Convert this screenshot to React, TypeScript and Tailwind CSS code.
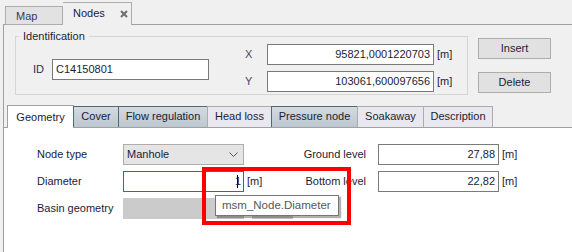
import type { ReactNode } from "react";

const innerTabs: { label: string; width: string; kind: "active" | "blue" | "light" }[] = [
  { label: "Geometry", width: "w-[67px]", kind: "active" },
  { label: "Cover", width: "w-[46px]", kind: "blue" },
  { label: "Flow regulation", width: "w-[90px]", kind: "blue" },
  { label: "Head loss", width: "w-[65px]", kind: "light" },
  { label: "Pressure node", width: "w-[87px]", kind: "blue" },
  { label: "Soakaway", width: "w-[67px]", kind: "light" },
  { label: "Description", width: "w-[70px]", kind: "light" }
];

const tabKindClass = {
  active: "h-[23px] -mb-px bg-white border border-b-0 border-[#a0a0a0] text-[#1b1b38] pt-[5px]",
  blue: "h-[21px] bg-gradient-to-b from-[#d3dbe1] to-[#bcc7cf] border border-b-0 border-[#4f6a73] text-[#1b1b38] pt-[3px]",
  light: "h-[21px] bg-[#e8e8ee] border border-b-0 border-[#acacac] text-[#1b1b38] pt-[3px]"
};

function Unit() {
  return <span className="ml-[3px] text-[#1b1b38]">[m]</span>;
}

function Field({ children, className = "" }: { children?: ReactNode; className?: string }) {
  return (
    <div className={`h-[21px] bg-white border border-[#7a7a7a] flex items-center justify-end pr-[3px] text-[#1b1b38] ${className}`}>
      {children}
    </div>
  );
}

export default function App() {
  return (
    <div
      className="relative w-[572px] h-[252px] overflow-hidden bg-[#f0f0f0] text-[11px] leading-[13px]"
      style={{ fontFamily: '"Liberation Sans", Arial, sans-serif' }}
    >
      {/* document tabs */}
      <div className="ml-[3px] h-[25px] flex items-end pl-[2px] border-b border-[#a0a0a0]">
        <div className="w-[58px] h-[19px] -mb-px border border-[#adadad] bg-[#e2e2e2] pl-[10px] pt-[3px] text-[#3a3a58]">
          Map
        </div>
        <div className="relative z-10 w-[69px] h-[23px] -mb-px border border-b-0 border-l-0 border-[#adadad] bg-[#f0f0f0] flex items-center pl-[10px] pb-[1px] text-[#1b1b38]">
          <span>Nodes</span>
          <svg className="ml-[15px]" width="8" height="8" viewBox="0 0 8 8">
            <path d="M1 1 L7 7 M7 1 L1 7" stroke="#6e6e6e" strokeWidth="2" />
          </svg>
        </div>
      </div>

      <div className="ml-[3px] border-l border-[#a0a0a0] h-[227px] flex flex-col">
        {/* identification */}
        <div className="flex">
          <fieldset className="ml-[11px] mt-[5px] w-[453px] h-[65px] border border-[#d5d5d5]">
            <legend className="ml-[3px] px-[4px] text-[#1b1b38]">Identification</legend>
            <div className="flex items-start">
              <div className="mt-[16px] ml-[17px] flex items-center">
                <span className="w-[19px] text-[#2e2e4c]">ID</span>
                <div className="w-[157px] h-[21px] bg-white border border-[#7a7a7a] flex items-center pl-[3px] text-[#1b1b38]">
                  C14150801
                </div>
              </div>
              <div className="ml-[36px] mt-[1px] flex flex-col gap-[6px]">
                <div className="flex items-center">
                  <span className="w-[22px] text-[#4a4a66]">X</span>
                  <Field className="w-[167px]">95821,0001220703</Field>
                  <Unit />
                </div>
                <div className="flex items-center">
                  <span className="w-[22px] text-[#4a4a66]">Y</span>
                  <Field className="w-[167px]">103061,600097656</Field>
                  <Unit />
                </div>
              </div>
            </div>
          </fieldset>
          <div className="ml-[10px] mt-[13px] flex flex-col gap-[13px]">
            <button className="w-[73px] h-[21px] bg-[#e1e1e1] border border-[#adadad] text-[#1b1b38]">Insert</button>
            <button className="w-[73px] h-[21px] bg-[#e1e1e1] border border-[#adadad] text-[#1b1b38]">Delete</button>
          </div>
        </div>

        {/* property tabs */}
        <div className="mt-[10px] h-[23px] flex items-end pl-[3px] border-b border-[#a0a0a0]">
          {innerTabs.map((tab) => (
            <div key={tab.label} className={`${tab.width} ${tabKindClass[tab.kind]} text-center -ml-px first:ml-0`}>
              {tab.label}
            </div>
          ))}
        </div>

        <div className="flex-1 bg-white pt-[16px] pl-[33px] flex">
          <div className="w-[263px] flex flex-col gap-[6px]">
            <div className="h-[21px] flex items-center">
              <span className="w-[86px] text-[#1b1b38]">Node type</span>
              <div className="w-[121px] h-[21px] bg-[#e5e5e5] border border-[#adadad] flex items-center pl-[3px] text-[#1b1b38]">
                <span className="flex-1">Manhole</span>
                <svg className="mr-[5px]" width="9" height="5" viewBox="0 0 9 5">
                  <path d="M0.5 0.5 L4.5 4.5 L8.5 0.5" fill="none" stroke="#555" strokeWidth="1" />
                </svg>
              </div>
            </div>
            <div className="h-[21px] flex items-center">
              <span className="w-[86px] text-[#1b1b38]">Diameter</span>
              <div className="w-[121px] h-[21px] bg-white border border-[#0078d7] flex items-center justify-end pr-[2px] text-[#1b1b38]">
                <span className="w-px h-[13px] bg-black -mr-[3px]" />
                <span>1</span>
              </div>
              <Unit />
            </div>
            <div className="h-[21px] flex items-center">
              <span className="w-[86px] text-[#1b1b38]">Basin geometry</span>
              <div className="w-[121px] h-[21px] bg-[#cbcbcb]" />
              <div className="ml-[8px] w-[41px] h-[21px] bg-[#cbcbcb]" />
            </div>
          </div>
          <div className="flex flex-col gap-[6px]">
            <div className="h-[21px] flex items-center">
              <span className="w-[66px] text-right text-[#1b1b38]">Ground level</span>
              <Field className="ml-[12px] w-[121px]">27,88</Field>
              <Unit />
            </div>
            <div className="h-[21px] flex items-center">
              <span className="w-[66px] text-right text-[#1b1b38]">Bottom level</span>
              <Field className="ml-[12px] w-[121px]">22,82</Field>
              <Unit />
            </div>
          </div>
        </div>
      </div>

      {/* tooltip over the diameter field */}
      <div className="absolute left-[215px] top-[195px] w-[124px] h-[21px] bg-white border border-[#767676] shadow-[2px_2px_1px_rgba(0,0,0,0.3)] pl-[6px] flex items-center text-[11.5px] text-[#575757]">
        msm_Node.Diameter
      </div>
      {/* red highlight frame */}
      <div className="absolute left-[202px] top-[167px] w-[149px] h-[58px] border-[4px] border-[#ff0000]" />
    </div>
  );
}
